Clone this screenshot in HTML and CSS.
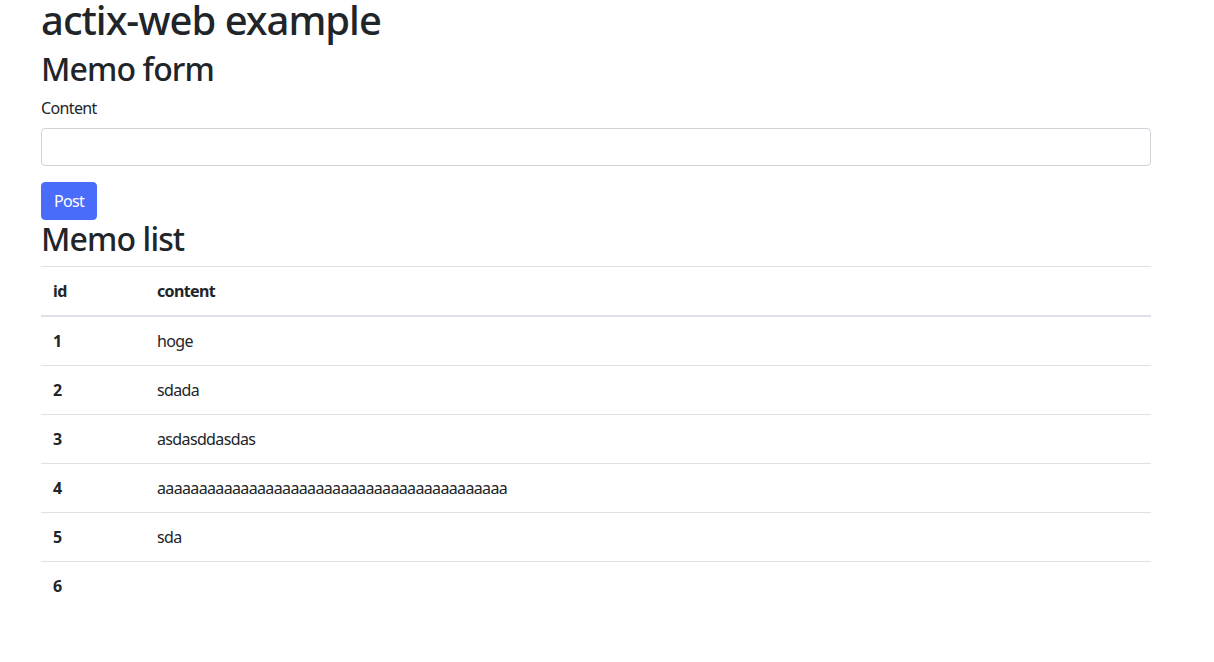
FILE: index.html
```html
<!DOCTYPE html>
<html lang="en">
<head>
<meta charset="utf-8">
<title>actix-web example</title>
<link rel="stylesheet" href="styles.css">
</head>
<body>
<div class="container">
  <h1 class="title">actix-web example</h1>
  <h2 class="subtitle">Memo form</h2>
  <form class="memo-form">
    <div class="form-group">
      <label class="form-label" for="content">Content</label>
      <input class="form-control" id="content" type="text" name="content">
    </div>
    <button class="btn-primary" type="submit">Post</button>
  </form>
  <h2 class="subtitle">Memo list</h2>
  <table class="memo-table">
    <colgroup><col class="col-id"><col class="col-content"></colgroup>
    <thead>
      <tr><th>id</th><th>content</th></tr>
    </thead>
    <tbody>
      <tr><th>1</th><td>hoge</td></tr>
      <tr><th>2</th><td>sdada</td></tr>
      <tr><th>3</th><td>asdasddasdas</td></tr>
      <tr><th>4</th><td>aaaaaaaaaaaaaaaaaaaaaaaaaaaaaaaaaaaaaaaaaa</td></tr>
      <tr><th>5</th><td>sda</td></tr>
      <tr><th>6</th><td></td></tr>
    </tbody>
  </table>
</div>
</body>
</html>
```
FILE: styles.css
```css
html, body {
  margin: 0;
  padding: 0;
  background: #ffffff;
}
body {
  font-family: "Noto Sans", "Open Sans", "DejaVu Sans", sans-serif;
  font-size: 16px;
  line-height: 1.5;
  color: #212529;
  letter-spacing: -0.04em;
}
.container {
  width: 1110px;
  margin-left: 41px;
}
.title {
  font-size: 40px;
  font-weight: 500;
  line-height: 39px;
  letter-spacing: -0.025em;
  margin: 0 0 11px 0;
}
.subtitle {
  font-size: 32px;
  font-weight: 500;
  line-height: 1.2;
  letter-spacing: -0.027em;
  margin: 0 0 8px 0;
}
.memo-form {
  margin: 0;
}
.form-group {
  margin-bottom: 16px;
}
.form-label {
  display: inline-block;
  margin-bottom: 8px;
}
.form-control {
  display: block;
  box-sizing: border-box;
  width: 100%;
  height: 38px;
  padding: 6px 12px;
  font: inherit;
  color: #495057;
  background: #fff;
  border: 1px solid #ced4da;
  border-radius: 4px;
  margin: 0;
}
.btn-primary {
  display: inline-block;
  font: inherit;
  letter-spacing: inherit;
  color: #fff;
  background: #4a6cfb;
  border: 1px solid #4a6cfb;
  border-radius: 4px;
  padding: 6px 12px;
  line-height: 1.5;
  margin: 0;
  vertical-align: top;
}
.memo-table {
  width: 100%;
  table-layout: fixed;
  border-collapse: collapse;
  margin-top: -1px;
  margin-bottom: 16px;
}
.memo-table .col-id {
  width: 104px;
}
.memo-table th,
.memo-table td {
  padding: 12px;
  border-top: 1px solid #dee2e6;
  text-align: left;
  vertical-align: top;
  height: 24px;
  white-space: nowrap;
}
.memo-table th {
  font-weight: 700;
}
.memo-table td {
  font-weight: 400;
}
.memo-table thead th {
  border-bottom: 2px solid #dee2e6;
  vertical-align: bottom;
}
```
